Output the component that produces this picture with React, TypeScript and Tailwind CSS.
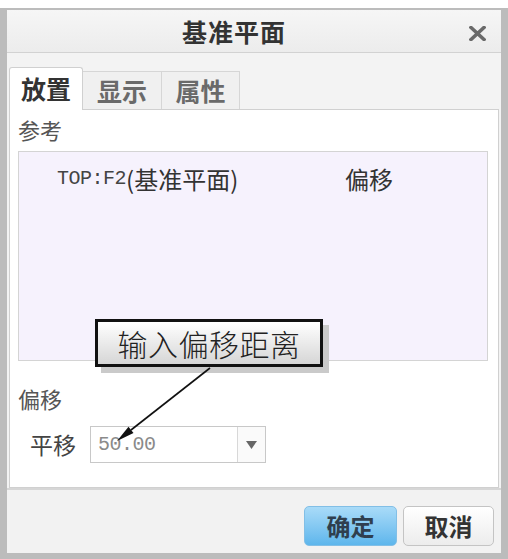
const cjk = "font-['Noto_Sans_CJK_SC','Noto_Sans',sans-serif]";

const App = () => {
    return (
        <div className={`relative w-[508px] h-[559px] bg-white pt-[8px] ${cjk}`}>
            <div className="flex flex-col h-full border-t-2 border-x-[7px] border-b-[6px] border-[#bcbcbc]">
                {/* title bar */}
                <div className="relative h-[43px] flex items-center justify-center bg-gradient-to-b from-[#f6f6f6] to-[#ececec] border-b border-[#d2d2d2] pr-[40px]">
                    <span className="text-[25px] font-bold text-[#333] leading-none tracking-[1px]">基准平面</span>
                    <svg className="absolute right-[15px] top-[16px]" width="17" height="15" viewBox="0 0 17 15">
                        <path d="M2 1.5 L15 13.5 M15 1.5 L2 13.5" stroke="#6a6a6a" strokeWidth="3.6" strokeLinecap="square" />
                    </svg>
                </div>

                {/* tabs + body */}
                <div className="flex flex-col flex-1 bg-[#f3f3f3] px-[2px]">
                    <div className="flex items-end h-[56px] pt-[14px]">
                        <div className="relative z-10 -mb-px h-[43px] w-[74px] flex items-center justify-center bg-white border border-b-0 border-[#d0d0d0] rounded-t-[3px] text-[25px] font-bold text-[#333]">
                            放置
                        </div>
                        <div className="h-[38px] w-[79px] flex items-center justify-center bg-[#f0f0f0] border-t border-r border-[#d6d6d6] text-[25px] font-bold text-[#6a6a6a]">
                            显示
                        </div>
                        <div className="h-[38px] w-[78px] flex items-center justify-center bg-[#f0f0f0] border-t border-r border-[#d6d6d6] text-[25px] font-bold text-[#6a6a6a]">
                            属性
                        </div>
                    </div>

                    <div className="flex-1 bg-white border border-[#d0d0d0] pl-[8px] pt-[5px]">
                        <div className="text-[22px] leading-[28px] text-[#555]">参考</div>
                        <div className="mt-[8px] w-[470px] h-[210px] bg-[#f6f2fd] border border-[#d4d4d4] pl-[38px] pt-[12px]">
                            <div className="flex items-center h-[30px]">
                                <div className="w-[288px] flex items-center">
                                    <span className="font-['Liberation_Mono',monospace] text-[20px] text-[#444] tracking-[-0.5px]">TOP:F2</span>
                                    <span className="text-[24px] text-[#333]">(基准平面)</span>
                                </div>
                                <span className="text-[24px] text-[#333]">偏移</span>
                            </div>
                        </div>
                        <div className="mt-[23px] text-[22px] leading-[28px] text-[#555]">偏移</div>
                        <div className="mt-[14px] flex items-center pl-[12px]">
                            <span className="text-[23px] text-[#444]">平移</span>
                            <div className="ml-[14px] flex w-[176px] h-[37px] border border-[#c8c8c8] bg-white">
                                <div className="flex-1 flex items-center pl-[7px] font-['Liberation_Mono',monospace] text-[20px] text-[#8a8a8a] tracking-[-0.5px]">
                                    50.00
                                </div>
                                <div className="w-[28px] flex items-center justify-center border-l border-[#d8d8d8] bg-[#fafafa]">
                                    <svg width="11" height="8" viewBox="0 0 11 8">
                                        <path d="M0 0 H11 L5.5 8 Z" fill="#666" />
                                    </svg>
                                </div>
                            </div>
                        </div>
                    </div>
                </div>

                {/* footer */}
                <div className="h-[65px] flex justify-end items-start gap-[6px] pt-[16px] pr-[7px] bg-[#f2f2f2] border-t-2 border-[#d6d6d6]">
                    <button className="w-[93px] h-[40px] rounded-[5px] border border-[#82bfe6] bg-gradient-to-b from-[#a9dbf8] to-[#5db6ec] text-[24px] font-bold text-[#2f3f4f] leading-none">
                        确定
                    </button>
                    <button className="w-[91px] h-[40px] rounded-[5px] border border-[#c4c4c4] bg-gradient-to-b from-white to-[#ececec] text-[24px] font-bold text-[#333] leading-none">
                        取消
                    </button>
                </div>
            </div>

            {/* annotation callout */}
            <div className="absolute left-[95px] top-[319px] w-[228px] h-[48px] flex items-center justify-center border-[3px] border-[#111] bg-gradient-to-b from-white to-[#d6d6d6] shadow-[6px_6px_0_#cacaca] text-[30px] font-light text-[#222] leading-none tracking-[0.5px]">
                输入偏移距离
            </div>
            <svg className="absolute left-0 top-0 pointer-events-none" width="508" height="559" viewBox="0 0 508 559">
                <line x1="210" y1="368" x2="131" y2="430" stroke="#111" strokeWidth="1.6" />
                <path d="M117 441 L133.5 432.9 L128.5 426.7 Z" fill="#111" />
            </svg>
        </div>
    );
};

export default App;
